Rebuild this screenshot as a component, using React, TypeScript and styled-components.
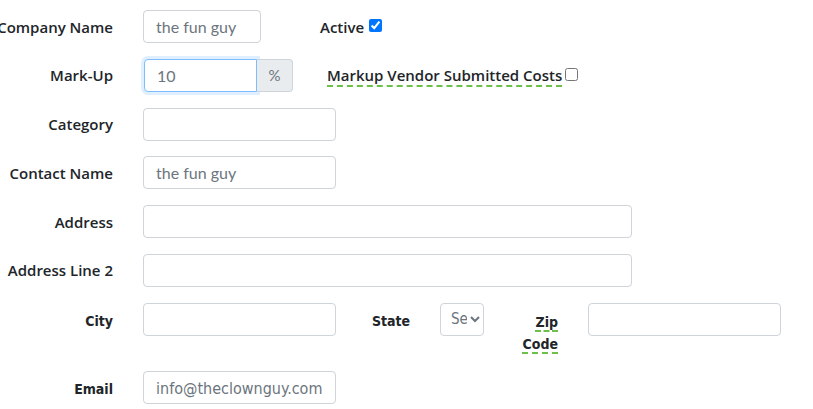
import React from "react";
import styled, { createGlobalStyle } from "styled-components";

const Global = createGlobalStyle`
  html, body { margin: 0; padding: 0; background: #fff; }
  body { font-family: "Open Sans", sans-serif; color: #212529; overflow: hidden; }
`;

const Form = styled.div`
  padding-top: 10px;
  display: flex;
  flex-direction: column;
  gap: 15.8px;
`;

const Row = styled.div`
  display: flex;
  align-items: flex-start;
`;

const Label = styled.div<{ $alt?: boolean; $w?: number; $ml?: number; $left?: boolean }>`
  box-sizing: border-box;
  width: ${(p) => p.$w ?? 113}px;
  margin-left: ${(p) => p.$ml ?? 0}px;
  flex: none;
  display: flex;
  justify-content: ${(p) => (p.$left ? "flex-start" : "flex-end")};
  white-space: nowrap;
  height: 33px;
  padding-top: ${(p) => (p.$alt ? 3 : 0)}px;
  align-items: center;
  font-family: ${(p) => (p.$alt ? '"DejaVu Sans Condensed", "DejaVu Sans", sans-serif' : '"Open Sans", sans-serif')};
  font-weight: ${(p) => (p.$alt ? 700 : 600)};
  font-size: ${(p) => (p.$alt ? 14 : 15)}px;
  color: #212529;
`;

const ZipLabel = styled.div`
  width: 38px;
  margin-left: 36px;
  flex: none;
  padding-top: 8px;
  text-align: right;
  line-height: 22px;
  font-family: "DejaVu Sans Condensed", "DejaVu Sans", sans-serif;
  font-weight: 700;
  font-size: 14px;
  span {
    text-decoration: underline dashed #6cc04a;
    text-decoration-thickness: 2px;
    text-underline-offset: 4px;
  }
`;

const Input = styled.input<{ $w: number; $ml?: number; $alt?: boolean; $focus?: boolean; $group?: boolean }>`
  box-sizing: border-box;
  width: ${(p) => p.$w}px;
  height: 33px;
  margin-left: ${(p) => p.$ml ?? 30}px;
  flex: none;
  padding: ${(p) => (p.$alt ? "2px 12px 0" : "0 12px")};
  border: 1px solid ${(p) => (p.$focus ? "#80bdff" : "#ced4da")};
  border-radius: ${(p) => (p.$group ? "4px 0 0 4px" : "4px")};
  box-shadow: ${(p) => (p.$focus ? "0 0 0 3px rgba(0,123,255,0.12)" : "none")};
  font-family: ${(p) => (p.$alt ? '"DejaVu Sans Condensed", "DejaVu Sans", sans-serif' : '"Lato", sans-serif')};
  font-size: 16px;
  color: #6c757d;
  background: #fff;
  outline: none;
`;

const Addon = styled.div`
  box-sizing: border-box;
  width: 36px;
  height: 33px;
  flex: none;
  display: flex;
  align-items: center;
  justify-content: center;
  background: #e9ecef;
  border: 1px solid #ced4da;
  border-left: none;
  border-radius: 0 4px 4px 0;
  color: #6c757d;
  font-family: "Lato", sans-serif;
  font-size: 15px;
`;

const CheckLabel = styled.label<{ $ml: number; $dashed?: boolean }>`
  margin-left: ${(p) => p.$ml}px;
  height: 33px;
  display: flex;
  align-items: center;
  font-weight: 600;
  font-size: 15px;
  white-space: nowrap;
  span {
    ${(p) =>
      p.$dashed
        ? `text-decoration: underline dashed #6cc04a; text-decoration-thickness: 2px; text-underline-offset: 4px;`
        : ""}
  }
  input {
    margin: 0 0 0 ${(p) => (p.$dashed ? 3 : 5)}px;
    width: 13px;
    height: 13px;
    accent-color: #0075ff;
    position: relative;
    top: -1px;
  }
`;

const Select = styled.select`
  box-sizing: border-box;
  width: 44px;
  height: 33px;
  flex: none;
  border: 1px solid #ced4da;
  border-radius: 4px;
  background: #fff;
  font-family: "DejaVu Sans Condensed", "DejaVu Sans", sans-serif;
  font-size: 15px;
  color: #6c757d;
  padding: 0 0 0 6px;
`;

export default function App() {
  return (
    <>
      <Global />
      <Form>
        <Row>
          <Label>Company Name</Label>
          <Input $w={118} defaultValue="the fun guy" />
          <CheckLabel $ml={59}>
            <span>Active</span>
            <input type="checkbox" defaultChecked />
          </CheckLabel>
        </Row>
        <Row>
          <Label>Mark-Up</Label>
          <Input $w={113} $ml={31} $focus $group defaultValue="10" />
          <Addon>%</Addon>
          <CheckLabel $ml={34} $dashed>
            <span>Markup Vendor Submitted Costs</span>
            <input type="checkbox" />
          </CheckLabel>
        </Row>
        <Row>
          <Label>Category</Label>
          <Input $w={193} />
        </Row>
        <Row>
          <Label>Contact Name</Label>
          <Input $w={193} defaultValue="the fun guy" />
        </Row>
        <Row>
          <Label>Address</Label>
          <Input $w={489} />
        </Row>
        <Row>
          <Label>Address Line 2</Label>
          <Input $w={489} />
        </Row>
        <Row>
          <Label $alt>City</Label>
          <Input $w={193} $alt />
          <Label $alt $left $w={68} $ml={36}>State</Label>
          <Select defaultValue="">
            <option value="">Select</option>
          </Select>
          <ZipLabel>
            <span>Zip</span>
            <br />
            <span>Code</span>
          </ZipLabel>
          <Input $w={193} $alt />
        </Row>
        <Row>
          <Label $alt>Email</Label>
          <Input $w={193} $alt defaultValue="info@theclownguy.com" />
        </Row>
      </Form>
    </>
  );
}
